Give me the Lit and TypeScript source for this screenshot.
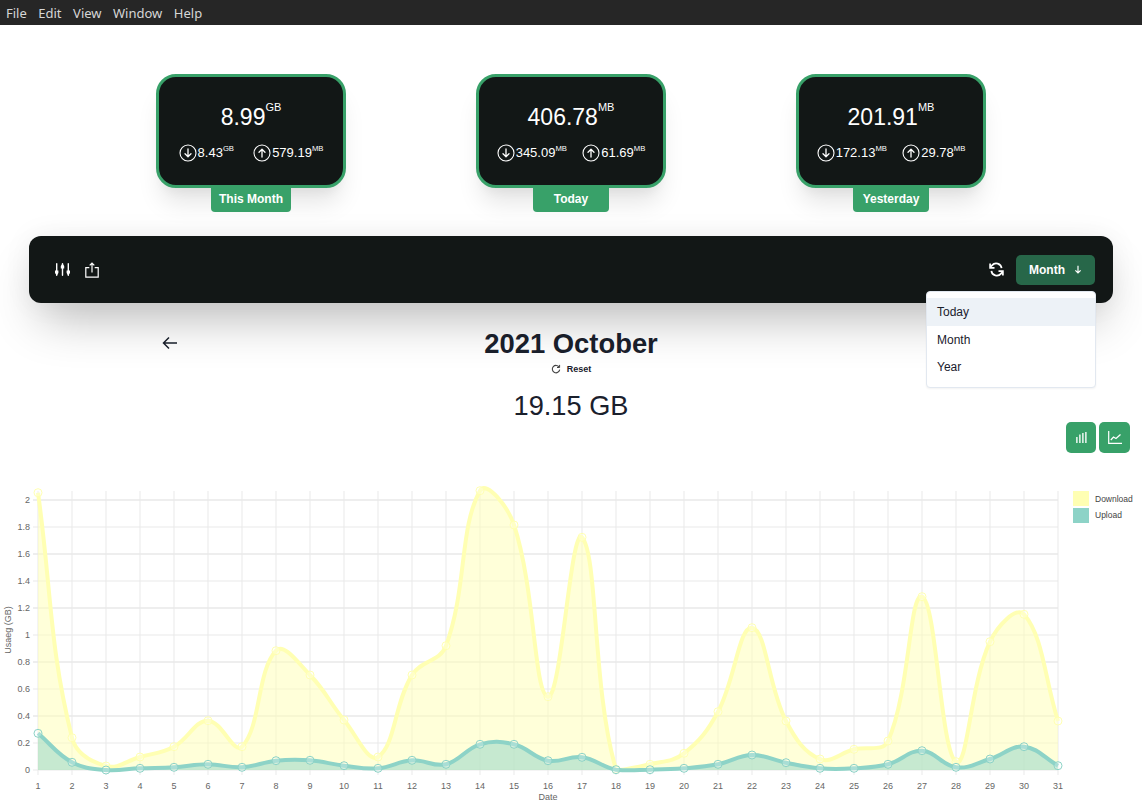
import { LitElement, html, css, svg } from "lit";
import { customElement } from "lit/decorators.js";

const DOWN = [492.7,737.7,766,757,746.7,720.7,746.7,650.7,675,720,757,675,645.7,490.7,525,696.7,537.3,769.3,764.3,753.3,711.7,627.7,721,759,749.3,741,596.7,761.7,641.7,614.3,721];
const UP = [733.3,762.3,770,768.3,767.3,764.3,767.3,760.7,760.3,765.7,768.3,760.3,764.3,744.3,744.3,760.7,757.3,769.7,769.7,768.3,764.3,755,762.7,768.3,768.3,764.3,750.7,767.3,759,746.7,765.7];
const X0 = 38, DX = 34, BASE = 770;
const xAt = (i: number) => X0 + i * DX;

function spline(ys: number[]): string {
  const pts = ys.map((y, i) => ({ x: xAt(i), y }));
  const T = 0.4;
  const cps = pts.map((p, i) => {
    const a = pts[Math.max(i - 1, 0)], b = pts[Math.min(i + 1, pts.length - 1)];
    const d1 = Math.hypot(p.x - a.x, p.y - a.y), d2 = Math.hypot(b.x - p.x, b.y - p.y);
    const tot = d1 + d2 || 1;
    const fa = (T * d1) / tot, fb = (T * d2) / tot;
    return {
      px: p.x - fa * (b.x - a.x), py: p.y - fa * (b.y - a.y),
      nx: p.x + fb * (b.x - a.x), ny: Math.min(p.y + fb * (b.y - a.y), BASE + 1),
    };
  });
  let d = `M${pts[0].x} ${pts[0].y}`;
  for (let i = 1; i < pts.length; i++) {
    d += ` C${cps[i - 1].nx.toFixed(2)} ${cps[i - 1].ny.toFixed(2)} ${cps[i].px.toFixed(2)} ${Math.min(cps[i].py, BASE + 1).toFixed(2)} ${pts[i].x} ${pts[i].y}`;
  }
  return d;
}

const arrowCircle = (up: boolean) => html`<svg class="circ" viewBox="0 0 18 18" width="18" height="18" fill="none" stroke="currentColor" stroke-linecap="round" stroke-linejoin="round">
  <circle cx="9" cy="9" r="8" stroke-width="1.1"></circle>
  ${up
    ? svg`<path d="M9 13V5.5M6 8.3L9 5.3L12 8.3" stroke-width="1.3"></path>`
    : svg`<path d="M9 5v7.5M6 9.7L9 12.7L12 9.7" stroke-width="1.3"></path>`}
</svg>`;

@customElement("stat-card")
class StatCard extends LitElement {
  static properties = {
    value: {}, unit: {}, down: {}, downUnit: {}, up: {}, upUnit: {}, label: {},
  };
  value = ""; unit = ""; down = ""; downUnit = ""; up = ""; upUnit = ""; label = "";
  static styles = css`
    :host { display: flex; flex-direction: column; align-items: center; font-family: "Liberation Sans", Arial, sans-serif; color: #fff; }
    .card { box-sizing: border-box; width: 190px; height: 114px; background: #121716; border: 3px solid #38a169; border-radius: 20px; box-shadow: 0 20px 25px -5px rgba(0,0,0,.1), 0 10px 10px -5px rgba(0,0,0,.04); display: flex; flex-direction: column; align-items: center; padding: 25px 10px 0; }
    .main { font-size: 23px; line-height: 30px; white-space: nowrap; }
    .main sup { font-size: 11px; line-height: 0; vertical-align: baseline; position: relative; top: -14px; }
    .row { width: 100%; display: flex; justify-content: space-around; margin-top: 12px; }
    .item { display: flex; align-items: center; gap: 1px; font-size: 13px; line-height: 18px; white-space: nowrap; }
    .item sup { font-size: 7.7px; line-height: 0; vertical-align: baseline; position: relative; top: -6.5px; }
    .circ { display: block; flex: none; }
    .tag { background: #38a169; font-size: 12px; font-weight: 700; line-height: 22px; padding: 0 8px 2px; border-radius: 0 0 4px 4px; white-space: nowrap; }
    .wide { min-width: 64px; text-align: center; }
    .narrow { min-width: 60px; text-align: center; }
  `;
  render() {
    return html`
      <div class="card">
        <div class="main">${this.value}<sup>${this.unit}</sup></div>
        <div class="row">
          <div class="item">${arrowCircle(false)}<span>${this.down}<sup>${this.downUnit}</sup></span></div>
          <div class="item">${arrowCircle(true)}<span>${this.up}<sup>${this.upUnit}</sup></span></div>
        </div>
      </div>
      <div class="tag ${this.label === "This Month" ? "wide" : "narrow"}">${this.label}</div>
    `;
  }
}

@customElement("app-root")
export class AppRoot extends LitElement {
  static styles = css`
    :host { display: block; width: 1142px; height: 808px; overflow: hidden; background: #fff; font-family: "Liberation Sans", Arial, sans-serif; color: #1a202c; }
    .menubar { height: 25px; background: #262626; display: flex; align-items: center; gap: 11.5px; padding-left: 6px; font-family: "Noto Sans", sans-serif; font-size: 13px; color: #d6d6d6; }
    .cards { display: grid; grid-template-columns: repeat(3, 320px); justify-content: center; padding-top: 49px; }
    .toolbar { position: relative; margin: 24px 29px 0; height: 67px; box-sizing: border-box; background: #121716; border-radius: 12px; box-shadow: 0 25px 50px -12px rgba(0,0,0,.3), 0 0 30px rgba(0,0,0,.06); display: flex; align-items: center; padding: 0 18px 0 26px; color: #fff; }
    .tools { display: flex; align-items: center; gap: 15px; }
    .spacer { flex: 1; }
    .ico { display: block; }
    .month { margin-left: 12px; width: 79px; height: 30px; background: #276749; border-radius: 5px; display: flex; align-items: center; justify-content: center; gap: 9px; font-size: 12px; font-weight: 700; color: #fff; }
    .menu { position: absolute; top: 55px; right: 17px; width: 170px; box-sizing: border-box; background: #fff; border: 1px solid #e2e8f0; border-radius: 4px; padding: 6px 0; box-shadow: 0 1px 2px rgba(0,0,0,.05); color: #1a202c; font-size: 12px; }
    .menu div { height: 27.5px; line-height: 28px; padding-left: 10px; }
    .menu .on { background: #edf2f7; }
    .title { display: grid; grid-template-columns: 1fr auto 1fr; align-items: center; margin-top: 24px; }
    .back { padding: 0 0 3px 162px; }
    h1 { margin: 0; font-size: 27.4px; line-height: 34px; font-weight: 700; text-align: center; }
    .reset { display: flex; align-items: center; justify-content: center; gap: 6px; font-size: 9px; font-weight: 700; line-height: 12px; margin-top: 2px; }
    .total { text-align: center; font-size: 27.2px; line-height: 32px; margin-top: 15px; }
    .kinds { display: flex; justify-content: flex-end; gap: 3px; padding-right: 12px; }
    .kind { height: 31px; width: 30px; background: #38a169; border-radius: 5px; display: flex; align-items: center; justify-content: center; color: #fff; }
    .kind + .kind { width: 31px; }
    .chart { display: block; margin-top: 27px; }
    .chart text { font-family: "Liberation Sans", Arial, sans-serif; font-size: 9px; fill: #666; }
    .chart .lg { font-size: 8.5px; fill: #444; }
  `;

  private series(ys: number[], color: string) {
    const d = spline(ys);
    const last = xAt(ys.length - 1);
    return svg`
      <path d="${d} L${last} ${BASE} L${X0} ${BASE} Z" fill=${color} fill-opacity="0.5"></path>
      <path d=${d} fill="none" stroke=${color} stroke-width="4"></path>
      ${ys.map((y, i) => svg`<circle cx=${xAt(i)} cy=${y} r="4" fill="#fff" fill-opacity="0.25" stroke=${color} stroke-width="1"></circle>`)}
    `;
  }

  private chart() {
    const yTicks = ["0", "0.2", "0.4", "0.6", "0.8", "1", "1.2", "1.4", "1.6", "1.8", "2"];
    const days = Array.from({ length: 31 }, (_, i) => i);
    return html`<svg class="chart" width="1142" height="328" viewBox="0 480 1142 328">
      ${yTicks.map((t, i) => {
        const y = BASE - 27 * i;
        return svg`
          <line x1="33" x2="1058" y1=${y} y2=${y} stroke="#e9e9e9" stroke-width=${i % 2 === 0 && i ? 1.5 : 1}></line>
          <text x="30" y=${y + 3} text-anchor="end">${t}</text>`;
      })}
      ${days.map((i) => svg`
        <line x1=${xAt(i)} x2=${xAt(i)} y1="491" y2="775" stroke="#e9e9e9" stroke-width="1"></line>
        <text x=${xAt(i)} y="789" text-anchor="middle">${i + 1}</text>`)}
      ${this.series(DOWN, "#ffffb3")}
      ${this.series(UP, "#8dd3c7")}
      <text x="548" y="800" text-anchor="middle">Date</text>
      <text transform="translate(11 630) rotate(-90)" text-anchor="middle">Usaeg (GB)</text>
      <rect x="1073" y="491" width="16" height="15" fill="#ffffb3"></rect>
      <text class="lg" x="1095" y="502">Download</text>
      <rect x="1073" y="508" width="16" height="15" fill="#8dd3c7"></rect>
      <text class="lg" x="1095" y="518">Upload</text>
    </svg>`;
  }

  render() {
    return html`
      <div class="menubar"><span>File</span><span>Edit</span><span>View</span><span>Window</span><span>Help</span></div>
      <div class="cards">
        <stat-card value="8.99" unit="GB" down="8.43" downUnit="GB" up="579.19" upUnit="MB" label="This Month"></stat-card>
        <stat-card value="406.78" unit="MB" down="345.09" downUnit="MB" up="61.69" upUnit="MB" label="Today"></stat-card>
        <stat-card value="201.91" unit="MB" down="172.13" downUnit="MB" up="29.78" upUnit="MB" label="Yesterday"></stat-card>
      </div>
      <div class="toolbar">
        <div class="tools">
          <svg class="ico" width="15" height="13" viewBox="0 0 15 13" fill="currentColor">
            <rect x="1" y="0" width="1.4" height="13" rx=".7"></rect><path d="M0 7.5H3.4V10L1.7 12.5L0 10Z"></path>
            <rect x="6.8" y="0" width="1.4" height="13" rx=".7"></rect><path d="M5.8 5.5H9.2V3L7.5 .5L5.8 3Z"></path>
            <rect x="12.6" y="0" width="1.4" height="13" rx=".7"></rect><path d="M11.6 7.5H15V10L13.3 12.5L11.6 10Z"></path>
          </svg>
          <svg class="ico" width="14" height="16" viewBox="0 0 14 16" fill="none" stroke="currentColor" stroke-width="1.2">
            <path d="M4.3 5.6H.8v9.6h12.4V5.6H9.7"></path><path d="M7 10.5V1.2M4.7 3.4L7 1l2.3 2.4"></path>
          </svg>
        </div>
        <div class="spacer"></div>
        <svg class="ico" width="15" height="15" viewBox="0 0 15 15" fill="none" stroke="currentColor" stroke-width="1.7">
          <path d="M12.6 6.2A5.4 5.4 0 0 0 3 3.4L1.4 5.2"></path><path d="M1.1 1.4V5.8H5.5"></path>
          <path d="M2.4 8.8A5.4 5.4 0 0 0 12 11.6L13.6 9.8"></path><path d="M13.9 13.6V9.2H9.5"></path>
        </svg>
        <div class="month"><span>Month</span>
          <svg width="8" height="9" viewBox="0 0 8 9" fill="none" stroke="currentColor" stroke-width="1.2"><path d="M4 .8V7.8M1.4 5.4L4 8L6.6 5.4"></path></svg>
        </div>
        <div class="menu"><div class="on">Today</div><div>Month</div><div>Year</div></div>
      </div>
      <div class="title">
        <div class="back">
          <svg class="ico" width="15" height="14" viewBox="0 0 15 14" fill="none" stroke="currentColor" stroke-width="1.5"><path d="M15 7H1.5M7 1.5L1.5 7L7 12.5"></path></svg>
        </div>
        <h1>2021 October</h1>
        <div></div>
      </div>
      <div class="reset">
        <svg class="ico" width="10" height="10" viewBox="0 0 10 10" fill="none" stroke="#444" stroke-width="1.1"><path d="M8.2 3.2A3.7 3.7 0 1 0 8.7 5.6"></path><path d="M8.6 .9V3.5H6" stroke-width="1"></path></svg>
        <span>Reset</span>
      </div>
      <div class="total">19.15 GB</div>
      <div class="kinds">
        <div class="kind"><svg width="11" height="11" viewBox="0 0 11 11" fill="#fff" fill-opacity=".8"><rect x="0" y="5" width="1.7" height="6"></rect><rect x="3" y="2.5" width="1.7" height="8.5"></rect><rect x="6" y="1" width="1.7" height="10"></rect><rect x="9" y="0" width="1.7" height="11"></rect></svg></div>
        <div class="kind"><svg width="14" height="13" viewBox="0 0 14 13" fill="none" stroke="#fff" stroke-width="1.2"><path d="M.7 0V12.3H14"></path><path d="M2.8 9L5.5 6L8 7.5L12.5 3.5" stroke-width="1.3"></path></svg></div>
      </div>
      ${this.chart()}
    `;
  }
}
void StatCard;
